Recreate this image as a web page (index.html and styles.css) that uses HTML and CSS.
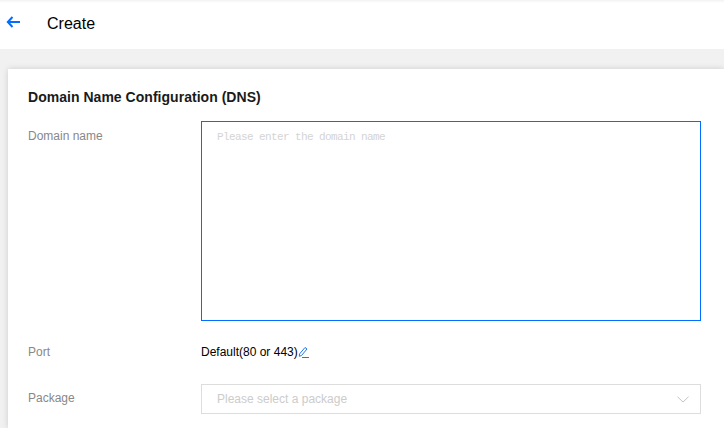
FILE: index.html
```html
<!DOCTYPE html>
<html lang="en">
<head>
    <meta charset="UTF-8">
    <meta name="viewport" content="width=device-width, initial-scale=1.0">
    <title>Create</title>
    <link rel="stylesheet" href="styles.css">
</head>
<body>
    <div class="top-bar">
        <svg class="back-icon" width="15" height="12" viewBox="0 0 15 12" fill="none" stroke="#006eff" stroke-width="2">
            <path d="M14 6H2"/>
            <path d="M6.500 1 1.800 6l4.700 5"/>
        </svg>
        <span class="page-title">Create</span>
    </div>
    <div class="form-card">
        <h2>Domain Name Configuration (DNS)</h2>
        <div class="form-row row-domain">
            <label for="domain">Domain name</label>
            <textarea id="domain" placeholder="Please enter the domain name"></textarea>
        </div>
        <div class="form-row row-port">
            <label>Port</label>
            <div class="port-value">
                Default(80 or 443)<svg class="edit-icon" width="11" height="12" viewBox="0 0 11 12" fill="none" stroke="#1f78e8" stroke-width="1">
                    <path d="M1.500 8 7 1.500l2 1.500L3.500 9.500l-2.200 .8z"/>
                    <path d="M4 11.500h7"/>
                </svg>
            </div>
        </div>
        <div class="form-row row-package">
            <label>Package</label>
            <div class="select-box">
                <span>Please select a package</span>
                <svg width="12" height="7" viewBox="0 0 12 7" fill="none" stroke="#c4c4c4" stroke-width="1">
                    <path d="M.5 .8 6 6l5.500-5.200"/>
                </svg>
            </div>
        </div>
    </div>
</body>
</html>
```

FILE: styles.css
```css
html, body {
    height: 100%;
    overflow: hidden;
}

body {
    margin: 0;
    background-color: #f1f1f1;
    font-family: "Liberation Sans", Arial, sans-serif;
    font-size: 12px;
    color: #000;
}

.top-bar {
    display: flex;
    align-items: center;
    height: 49px;
    padding-left: 6px;
    box-sizing: border-box;
    background-color: #fff;
    box-shadow: inset 0 3px 3px -2px #eee;
}

.back-icon {
    margin-top: -5px;
}

.page-title {
    margin-left: 26px;
    margin-top: -2px;
    font-size: 16px;
}

.form-card {
    margin: 20px 0 0 8px;
    padding: 20px 23px 0 20px;
    height: 359px;
    box-sizing: border-box;
    background-color: #fff;
    box-shadow: 0 0 6px rgba(0, 0, 0, 0.15);
}

.form-card h2 {
    margin: 0 0 16px;
    font-size: 14px;
    line-height: 16px;
    font-weight: bold;
    color: #1a1a1a;
    letter-spacing: 0.03px;
}

.form-row {
    display: flex;
}

.form-row label {
    width: 173px;
    flex-shrink: 0;
    color: #888;
    line-height: 14px;
    padding-top: 8px;
}

.row-domain textarea {
    width: 500px;
    height: 200px;
    box-sizing: border-box;
    margin: 0;
    padding: 8px 15px;
    border: 1px solid #006eff;
    border-radius: 0;
    outline: none;
    resize: none;
    font-family: "Liberation Mono", monospace;
    font-size: 11px;
    letter-spacing: -0.6px;
    line-height: 14px;
}

.row-domain textarea::placeholder {
    color: #d4d4d4;
    opacity: 1;
}

.row-port {
    margin-top: 16px;
    height: 32px;
}

.port-value {
    padding-top: 8px;
    line-height: 14px;
}

.edit-icon {
    vertical-align: -2px;
}

.row-package {
    margin-top: 15px;
}

.row-package label {
    padding-top: 7px;
}

.select-box {
    display: flex;
    align-items: center;
    justify-content: space-between;
    width: 500px;
    height: 30px;
    box-sizing: border-box;
    padding: 0 11px 0 15px;
    border: 1px solid #ddd;
    color: #ccc;
}
```
